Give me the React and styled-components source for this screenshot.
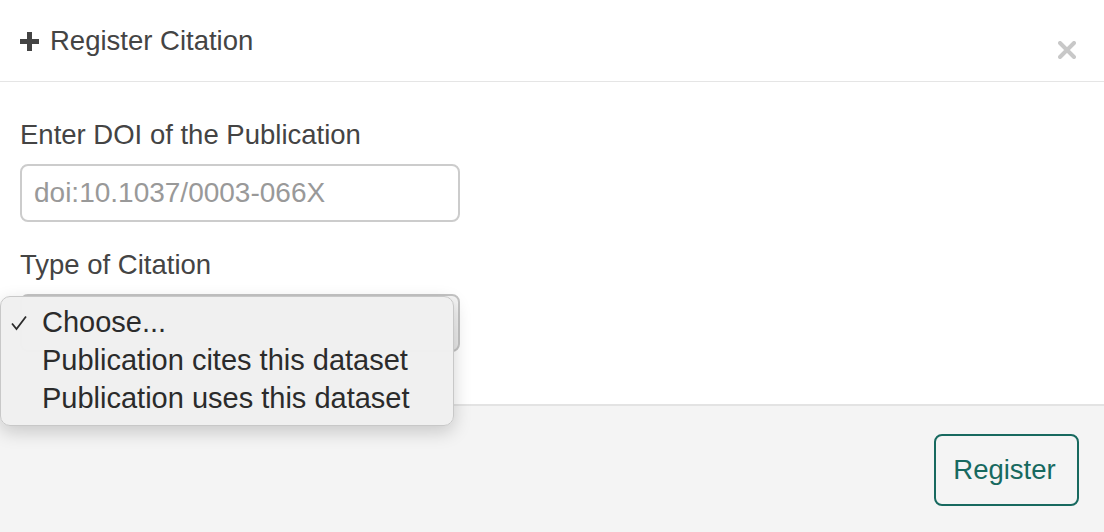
import React from 'react'
import styled, { createGlobalStyle } from 'styled-components'

const Global = createGlobalStyle`
  html, body { margin: 0; padding: 0; background: #fff; }
  body { font-family: "Liberation Sans", Arial, sans-serif; color: #333; }
`

const Modal = styled.div`
  position: relative;
  width: 1104px;
  height: 532px;
  display: flex;
  flex-direction: column;
  background: #fff;
  overflow: hidden;
`

const Header = styled.div`
  height: 81px;
  border-bottom: 1px solid #e5e5e5;
  display: flex;
  align-items: flex-start;
  justify-content: space-between;
  padding: 0 26px 0 20px;
  box-sizing: content-box;
`

const Title = styled.h4`
  margin: 0;
  padding-top: 25px;
  font-size: 27.5px;
  line-height: 32px;
  font-weight: normal;
  color: #444;
  display: flex;
  align-items: center;
  gap: 11px;
`

const Close = styled.button`
  border: 0;
  background: none;
  padding: 0;
  margin-top: 39px;
  width: 22px;
  height: 22px;
  display: flex;
  align-items: center;
  justify-content: center;
`

const Body = styled.div`
  padding: 38px 20px 0;
  height: 322px;
  box-sizing: border-box;
`

const Group = styled.div`
  margin-bottom: ${p => p.gap || 0}px;
`

const Label = styled.label`
  display: block;
  font-size: 27.5px;
  color: #444;
  line-height: 30px;
  margin-bottom: 14px;
`

const Input = styled.input`
  width: 440px;
  height: 58px;
  box-sizing: border-box;
  border: 2px solid #ccc;
  border-radius: 8px;
  padding: 0 12px;
  font-family: "Liberation Sans", Arial, sans-serif;
  font-size: 28px;
  color: #555;
  outline: none;
  &::placeholder { color: #999; }
`

const Select = styled.div`
  width: 440px;
  height: 58px;
  box-sizing: border-box;
  border: 2px solid #c4c4c4;
  border-radius: 8px;
  background: linear-gradient(#f6f6f6, #e8e8e8);
`

const Footer = styled.div`
  flex: 1;
  border-top: 2px solid #e3e3e3;
  background: #f4f4f4;
  display: flex;
  justify-content: flex-end;
  align-items: flex-start;
  padding: 28px 25px 0;
`

const Button = styled.button`
  width: 145px;
  height: 72px;
  border: 2px solid #17695f;
  border-radius: 8px;
  background: transparent;
  color: #17695f;
  font-family: "Liberation Sans", Arial, sans-serif;
  font-size: 27.5px;
  padding-right: 10px;
`

const Menu = styled.ul`
  position: absolute;
  left: 0;
  top: 296px;
  width: 454px;
  height: 130px;
  box-sizing: border-box;
  margin: 0;
  padding: 6px 0 0;
  list-style: none;
  background: rgba(240, 240, 240, 0.98);
  border: 1px solid #c8c8c8;
  border-radius: 10px;
  box-shadow: 0 6px 18px rgba(0, 0, 0, 0.18);
`

const Option = styled.li`
  position: relative;
  padding-left: 41px;
  height: 38px;
  line-height: 38px;
  font-size: 29px;
  color: #2b2b2b;
`

const Check = styled.svg`
  position: absolute;
  left: 10px;
  top: 12px;
`

export default function App() {
  return (
    <Modal>
      <Global />
      <Header>
        <Title>
          <svg width="19" height="19" viewBox="0 0 19 19">
            <path d="M7 0h5v7h7v5h-7v7H7v-7H0V7h7z" fill="#444" />
          </svg>
          Register Citation
        </Title>
        <Close aria-label="close">
          <svg width="18" height="18" viewBox="0 0 18 18">
            <path d="M2 2L16 16M16 2L2 16" stroke="#c8c8c8" strokeWidth="4" strokeLinecap="round" />
          </svg>
        </Close>
      </Header>
      <Body>
        <Group gap={28}>
          <Label>Enter DOI of the Publication</Label>
          <Input placeholder="doi:10.1037/0003-066X" />
        </Group>
        <Group>
          <Label>Type of Citation</Label>
          <Select />
        </Group>
      </Body>
      <Footer>
        <Button>Register</Button>
      </Footer>
      <Menu>
        <Option>
          <Check width="16" height="16" viewBox="0 0 16 16">
            <path d="M1 8.5L5.5 14L15 1.5" fill="none" stroke="#2b2b2b" strokeWidth="1.8" />
          </Check>
          Choose...
        </Option>
        <Option>Publication cites this dataset</Option>
        <Option>Publication uses this dataset</Option>
      </Menu>
    </Modal>
  )
}
